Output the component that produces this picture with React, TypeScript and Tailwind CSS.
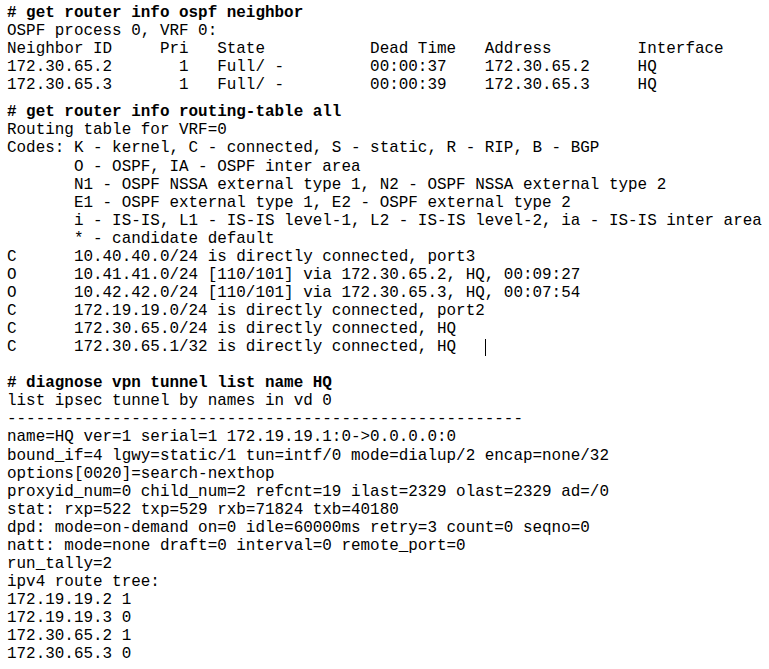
const neighbor = [
  "OSPF process 0, VRF 0:",
  "Neighbor ID     Pri   State           Dead Time   Address         Interface",
  "172.30.65.2       1   Full/ -         00:00:37    172.30.65.2     HQ",
  "172.30.65.3       1   Full/ -         00:00:39    172.30.65.3     HQ",
];

const routing = [
  "Routing table for VRF=0",
  "Codes: K - kernel, C - connected, S - static, R - RIP, B - BGP",
  "       O - OSPF, IA - OSPF inter area",
  "       N1 - OSPF NSSA external type 1, N2 - OSPF NSSA external type 2",
  "       E1 - OSPF external type 1, E2 - OSPF external type 2",
  "       i - IS-IS, L1 - IS-IS level-1, L2 - IS-IS level-2, ia - IS-IS inter area",
  "       * - candidate default",
  "C      10.40.40.0/24 is directly connected, port3",
  "O      10.41.41.0/24 [110/101] via 172.30.65.2, HQ, 00:09:27",
  "O      10.42.42.0/24 [110/101] via 172.30.65.3, HQ, 00:07:54",
  "C      172.19.19.0/24 is directly connected, port2",
  "C      172.30.65.0/24 is directly connected, HQ",
];

const tunnel = [
  "list ipsec tunnel by names in vd 0",
  "------------------------------------------------------",
  "name=HQ ver=1 serial=1 172.19.19.1:0->0.0.0.0:0",
  "bound_if=4 lgwy=static/1 tun=intf/0 mode=dialup/2 encap=none/32",
  "options[0020]=search-nexthop",
  "proxyid_num=0 child_num=2 refcnt=19 ilast=2329 olast=2329 ad=/0",
  "stat: rxp=522 txp=529 rxb=71824 txb=40180",
  "dpd: mode=on-demand on=0 idle=60000ms retry=3 count=0 seqno=0",
  "natt: mode=none draft=0 interval=0 remote_port=0",
  "run_tally=2",
  "ipv4 route tree:",
  "172.19.19.2 1",
  "172.19.19.3 0",
  "172.30.65.2 1",
  "172.30.65.3 0",
];

const Lines = ({ rows }: { rows: string[] }) => (
  <>
    {rows.map((r, i) => (
      <div key={i} className="h-[18.07px]">
        {r}
      </div>
    ))}
  </>
);

const Cmd = ({ text }: { text: string }) => (
  <div className="h-[18.07px] font-bold">{text}</div>
);

export default function App() {
  return (
    <div className="min-h-[669px] w-[769px] bg-white pl-[7px] pt-[4px] text-black">
      <div className="whitespace-pre font-['Liberation_Mono','Courier_New',monospace] text-[15.93px] leading-[18.07px]">
        <Cmd text="# get router info ospf neighbor" />
        <Lines rows={neighbor} />
        <div className="h-[9px]" />
        <Cmd text="# get router info routing-table all" />
        <Lines rows={routing} />
        <div className="flex h-[18.07px] items-center">
          <span>C      172.30.65.1/32 is directly connected, HQ   </span>
          <span className="h-[17px] w-[1px] bg-black" />
        </div>
        <div className="h-[18.07px]" />
        <Cmd text="# diagnose vpn tunnel list name HQ" />
        <Lines rows={tunnel} />
      </div>
    </div>
  );
}
